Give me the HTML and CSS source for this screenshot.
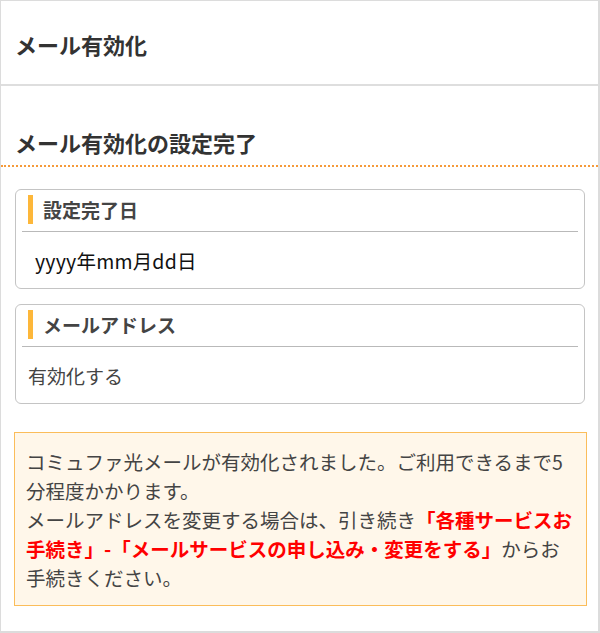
FILE: index.html
```html
<!DOCTYPE html>
<html lang="ja">
<head>
<meta charset="utf-8">
<title>メール有効化</title>
<link rel="stylesheet" href="styles.css">
</head>
<body>
<div class="frame">
  <header class="page-header">
    <h1 class="page-title">メール有効化</h1>
  </header>
  <h2 class="section-title">メール有効化の設定完了</h2>
  <div class="content">
    <div class="card">
      <div class="card-head"><span class="card-bar"></span><span class="card-label">設定完了日</span></div>
      <div class="card-value card-value--date">yyyy年mm月dd日</div>
    </div>
    <div class="card">
      <div class="card-head"><span class="card-bar"></span><span class="card-label">メールアドレス</span></div>
      <div class="card-value">有効化する</div>
    </div>
    <div class="notice">
      コミュファ光メールが有効化されました。ご利用できるまで5分程度かかります。<br>メールアドレスを変更する場合は、引き続き<strong class="em">「各種サービスお手続き」-「メールサービスの申し込み・変更をする」</strong>からお手続きください。
    </div>
  </div>
</div>
</body>
</html>
```

FILE: styles.css
```css
* { box-sizing: border-box; }
html, body { margin: 0; padding: 0; background: #fff; }
body {
  font-family: "Noto Sans CJK JP", "Noto Sans", sans-serif;
  color: #333;
}
.frame {
  width: 600px;
  height: 633px;
  border: 1px solid #dcdcdc;
  border-right-width: 2px;
  border-bottom-width: 2px;
  overflow: hidden;
}
.page-header {
  padding: 28px 14px 25px;
  border-bottom: 2px solid #dedede;
}
.page-title {
  margin: 0;
  font-size: 22px;
  line-height: 30px;
  font-weight: bold;
  color: #333;
}
.section-title {
  margin: 0;
  padding: 41px 14px 8px;
  font-size: 22px;
  line-height: 30px;
  font-weight: bold;
  color: #333;
  border-bottom: 2px dotted #f59a3a;
}
.content {
  padding: 22px 11px 0 13px;
}
.card {
  margin: 0 2px 15px 1px;
  border: 1px solid #c4c4c4;
  border-radius: 6px;
  padding: 0 6px;
  height: 100px;
}
.card-head {
  display: flex;
  align-items: center;
  gap: 10px;
  padding: 5px 0 7px 6px;
  border-bottom: 1px solid #b9b9b9;
}
.card-bar {
  width: 5px;
  height: 29px;
  background: #fdb73a;
}
.card-label {
  font-size: 19px;
  font-weight: bold;
  color: #444;
  line-height: 29px;
}
.card-value {
  padding: 14px 6px 0;
  font-size: 19px;
  line-height: 30px;
  color: #444;
}
.card-value--date {
  padding-left: 13px;
  font-size: 19.5px;
  letter-spacing: 0.2px;
  color: #111;
}
.notice {
  margin-top: 28px;
  border: 1px solid #fbbd5a;
  background: #fff7ea;
  padding: 14px 12px 13px 11px;
  font-size: 19.5px;
  line-height: 29px;
  color: #444;
}
.em {
  color: #f00;
  font-weight: bold;
}
```
